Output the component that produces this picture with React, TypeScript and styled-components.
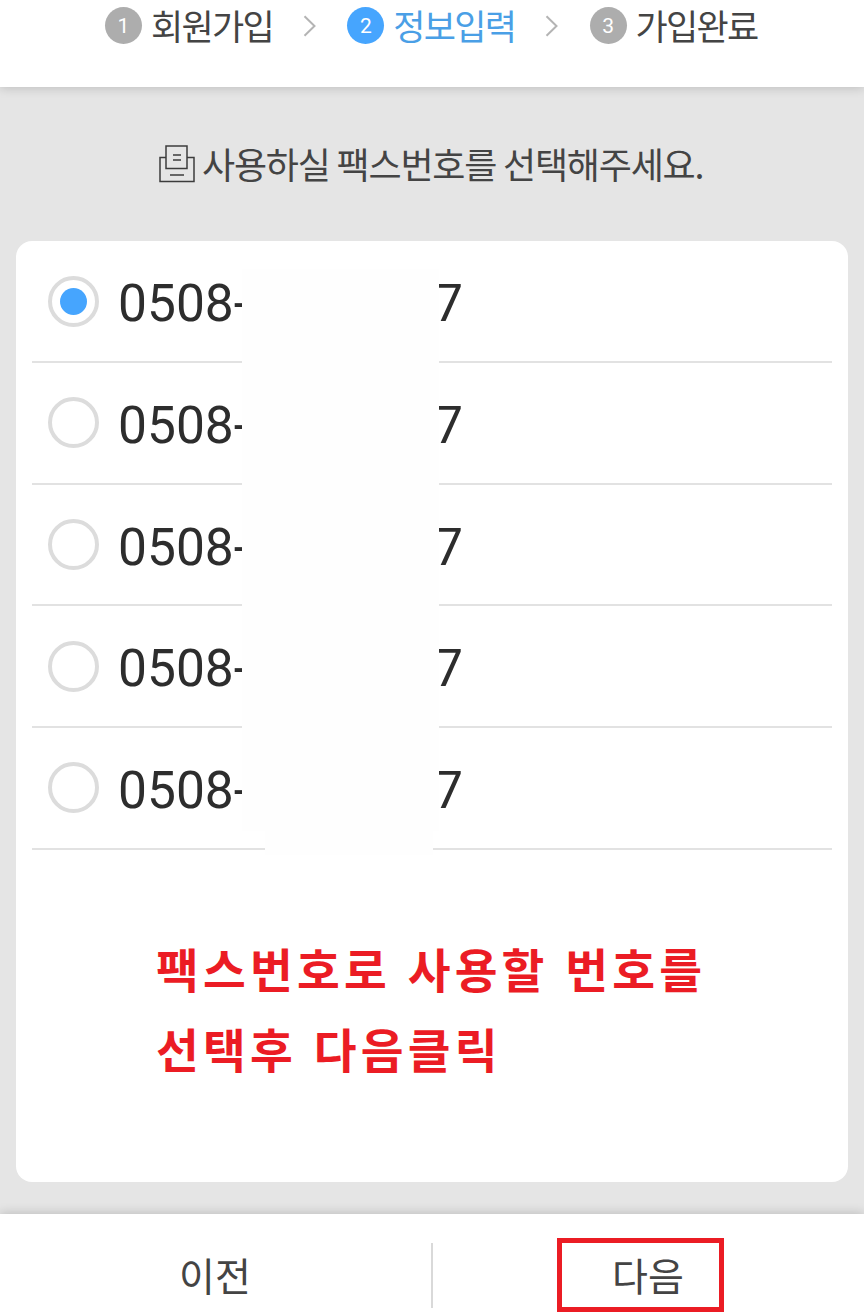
import React, { useState } from "react";
import styled, { createGlobalStyle } from "styled-components";

const GlobalStyle = createGlobalStyle`
  *, *::before, *::after { box-sizing: border-box; }
  body {
    margin: 0;
    background: #e5e5e5;
    font-family: "Noto Sans CJK KR", "Noto Sans", sans-serif;
    color: #444;
    overflow: hidden;
  }
`;

const Page = styled.div`
  display: flex;
  flex-direction: column;
  height: 1315px;
  width: 864px;
  overflow: hidden;
`;

const Header = styled.header`
  flex: none;
  display: flex;
  height: 87px;
  padding-left: 105px;
  background: #fff;
  box-shadow: 0 1px 10px rgba(0, 0, 0, 0.18);
`;

const Step = styled.div<{ $active?: boolean }>`
  display: flex;
  align-items: center;
  width: 242.3px;
  height: 51px;
  color: ${(p) => (p.$active ? "#4a9fe6" : "#444")};
`;

const StepNumber = styled.span<{ $active?: boolean }>`
  display: flex;
  align-items: center;
  justify-content: center;
  width: 37px;
  height: 37px;
  padding-top: 2px;
  border-radius: 50%;
  background: ${(p) => (p.$active ? "#46a5fe" : "#adadad")};
  color: #fff;
  font: 21px/35px Roboto, sans-serif;
`;

const StepLabel = styled.span`
  width: 124px;
  margin-left: 9px;
  padding-bottom: 2px;
  font-size: 35px;
  line-height: 48px;
  letter-spacing: -1.7px;
  white-space: nowrap;
`;

const Chevron = styled.svg`
  margin-left: 28px;
`;

const Title = styled.h1`
  flex: none;
  display: flex;
  align-items: center;
  height: 154px;
  margin: 0;
  padding-left: 159px;
  font-size: 36px;
  font-weight: 400;
  line-height: 54px;
  letter-spacing: -1.2px;
  white-space: nowrap;
`;

const TitleText = styled.span`
  padding-bottom: 2px;
`;

const FaxIcon = styled.svg`
  flex: none;
  margin-right: 7px;
`;

const Card = styled.main`
  position: relative;
  flex: none;
  height: 941px;
  margin: 0 16px;
  padding: 0.6px 16px 0;
  border-radius: 16px;
  background: #fff;
`;

const NumberRow = styled.label`
  display: flex;
  align-items: center;
  height: 121.6px;
  padding-left: 16px;
  border-bottom: 2px solid #e2e2e2;
`;

const HiddenInput = styled.input`
  appearance: none;
  width: 0;
  height: 0;
  margin: 0;
`;

const Radio = styled.span<{ $checked: boolean }>`
  display: flex;
  align-items: center;
  justify-content: center;
  width: 51px;
  height: 51px;
  border: 4px solid #dcdcdc;
  border-radius: 50%;

  &::after {
    content: "";
    width: 27px;
    height: 27px;
    border-radius: 50%;
    background: ${(p) => (p.$checked ? "#46a5fe" : "transparent")};
  }
`;

const Digits = styled.span`
  display: flex;
  margin: 6px 0 0 19px;
  color: #2d2d2d;
  font: 51.5px/60px Roboto, sans-serif;
`;

const Prefix = styled.span`
  width: 316px;
`;

const Mask = styled.div<{ $left: number; $top: number; $width: number; $height: number }>`
  position: absolute;
  left: ${(p) => p.$left}px;
  top: ${(p) => p.$top}px;
  width: ${(p) => p.$width}px;
  height: ${(p) => p.$height}px;
  background: #fefefe;
`;

const Notice = styled.p`
  margin: 78px 0 0 124px;
  color: #eb1c24;
  font-size: 46.5px;
  font-weight: 700;
  line-height: 80px;
  letter-spacing: 4.2px;
  word-spacing: 2px;
  white-space: nowrap;
`;

const Footer = styled.footer`
  flex: none;
  display: flex;
  align-items: flex-start;
  height: 101px;
  margin-top: 32px;
  background: #fff;
  box-shadow: 0 -1px 10px rgba(0, 0, 0, 0.18);
`;

const FooterButton = styled.button`
  position: relative;
  flex: 1;
  height: 101px;
  padding: 0 1px 3px 0;
  border: 0;
  background: none;
  color: #444;
  font: 39px/80px "Noto Sans CJK KR", sans-serif;
`;

const ButtonText = styled.span`
  display: block;
  padding-top: 20px;
`;

const Divider = styled.span`
  width: 2px;
  height: 65px;
  margin-top: 29px;
  background: #d9d9d9;
`;

const Highlight = styled.span`
  position: absolute;
  left: 124px;
  top: 24px;
  width: 167px;
  height: 74px;
  border: 5px solid #eb1c24;
`;

const steps = ["회원가입", "정보입력", "가입완료"];
const numbers = [0, 1, 2, 3, 4];

export default function App() {
  const [selected, setSelected] = useState(0);

  return (
    <Page>
      <GlobalStyle />
      <Header>
        {steps.map((label, i) => (
          <Step key={label} $active={i === 1}>
            <StepNumber $active={i === 1}>{i + 1}</StepNumber>
            <StepLabel>{label}</StepLabel>
            {i < 2 && (
              <Chevron width="14" height="22" viewBox="0 0 14 22" fill="none" stroke="#b4b4b4" strokeWidth="2">
                <path d="M1.5 1.2L11.5 11L1.5 20.8" />
              </Chevron>
            )}
          </Step>
        ))}
      </Header>
      <Title>
        <FaxIcon width="36" height="38" viewBox="0 0 36 38" fill="none" stroke="#3c3c3c" strokeWidth="1.5">
          <path d="M7 12.5H1V36.5H35V12.5H28M7 1H28V23.5H7ZM14 10H22M14 15H22M11 30H25" />
        </FaxIcon>
        <TitleText>사용하실 팩스번호를 선택해주세요.</TitleText>
      </Title>
      <Card>
        {numbers.map((n) => (
          <NumberRow key={n}>
            <HiddenInput type="radio" name="fax" checked={selected === n} onChange={() => setSelected(n)} />
            <Radio $checked={selected === n} />
            <Digits>
              <Prefix>0508-</Prefix>7
            </Digits>
          </NumberRow>
        ))}
        <Mask $left={226} $top={28} $width={197} $height={562} />
        <Mask $left={249} $top={560} $width={168} $height={54} />
        <Notice>
          팩스번호로 사용할 번호를
          <br />
          선택후 다음클릭
        </Notice>
      </Card>
      <Footer>
        <FooterButton type="button">
          <ButtonText>이전</ButtonText>
        </FooterButton>
        <Divider />
        <FooterButton type="button">
          <ButtonText>다음</ButtonText>
          <Highlight />
        </FooterButton>
      </Footer>
    </Page>
  );
}
